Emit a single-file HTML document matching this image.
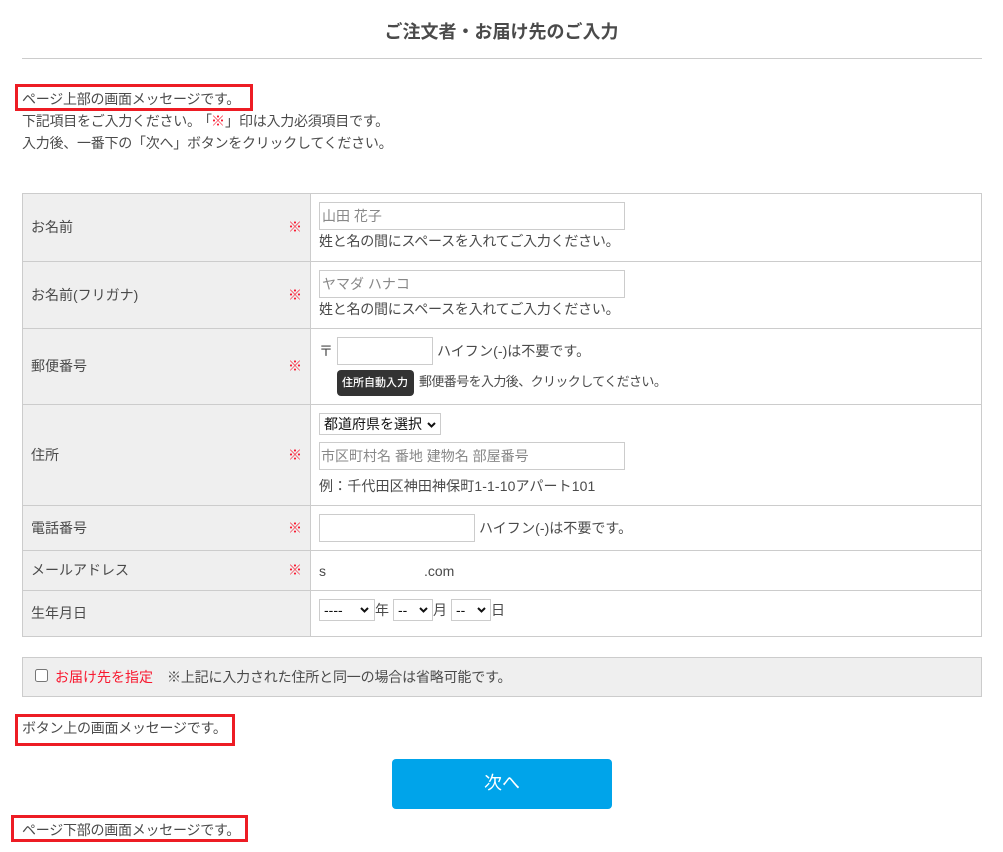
<!DOCTYPE html>
<html lang="ja">
<head>
<meta charset="utf-8">
<title>ご注文者・お届け先のご入力</title>
<style>
html,body{margin:0;padding:0;background:#fff}
body{position:relative;width:1003px;height:852px;overflow:hidden;font-family:"Liberation Sans","Noto Sans CJK JP",sans-serif;font-size:14px;color:#4a4a4a;letter-spacing:-.25px}
.t{position:absolute;white-space:nowrap;line-height:20px;height:20px}
.n{letter-spacing:0}
.w{letter-spacing:.12px}
.h{letter-spacing:.04px}
.b{position:absolute;box-sizing:border-box}
.line{position:absolute;background:#ccc}
.red{color:#f8182f;letter-spacing:0}
.ph{color:#888;letter-spacing:0}
.inp{position:absolute;box-sizing:border-box;border:1px solid #ccc;background:#fff}
.redbox{position:absolute;box-sizing:border-box;border:3px solid #ed1c24}
select{position:absolute;box-sizing:border-box;height:22px;border:1px solid #ccc;border-radius:0;background:#fff;color:#111;font-family:"Liberation Sans","Noto Sans CJK JP",sans-serif;font-size:14px;letter-spacing:0;padding:0 0 0 4px;margin:0;-webkit-appearance:none;appearance:none}
svg.ch{position:absolute;width:9px;height:6px;pointer-events:none}
</style>
</head>
<body>
<div class="t n" style="left:0;width:1003px;top:22px;text-align:center;font-size:18px;font-weight:bold">ご注文者・お届け先のご入力</div>
<div class="line" style="left:22px;top:58px;width:960px;height:1px"></div>

<div class="redbox" style="left:15px;top:84px;width:238px;height:27px"></div>
<div class="t" style="left:22px;top:89px">ページ上部の画面メッセージです。</div>
<div class="t" style="left:22px;top:111px">下記項目をご入力ください。</div>
<div class="t n" style="left:198px;top:111px">「</div>
<div class="t red" style="left:211px;top:111px">※</div>
<div class="t n" style="left:225px;top:111px">」</div>
<div class="t" style="left:239px;top:111px">印は入力必須項目です。</div>
<div class="t" style="left:22px;top:133px">入力後、一番下の「次へ」ボタンをクリックしてください。</div>

<!-- table -->
<div class="b" style="left:22px;top:193px;width:960px;height:444px;border:1px solid #ccc"></div>
<div class="b" style="left:23px;top:194px;width:287px;height:442px;background:#efefef"></div>
<div class="line" style="left:310px;top:194px;width:1px;height:442px"></div>
<div class="line" style="left:23px;top:261px;width:958px;height:1px"></div>
<div class="line" style="left:23px;top:328px;width:958px;height:1px"></div>
<div class="line" style="left:23px;top:404px;width:958px;height:1px"></div>
<div class="line" style="left:23px;top:505px;width:958px;height:1px"></div>
<div class="line" style="left:23px;top:550px;width:958px;height:1px"></div>
<div class="line" style="left:23px;top:590px;width:958px;height:1px"></div>

<div class="t n" style="left:31px;top:217px">お名前</div>
<div class="t red" style="left:288px;top:217px">※</div>
<div class="t n" style="left:31px;top:285px">お名前(フリガナ)</div>
<div class="t red" style="left:288px;top:285px">※</div>
<div class="t n" style="left:31px;top:356px">郵便番号</div>
<div class="t red" style="left:288px;top:356px">※</div>
<div class="t n" style="left:31px;top:445px">住所</div>
<div class="t red" style="left:288px;top:445px">※</div>
<div class="t n" style="left:31px;top:518px">電話番号</div>
<div class="t red" style="left:288px;top:518px">※</div>
<div class="t n" style="left:31px;top:560px">メールアドレス</div>
<div class="t red" style="left:288px;top:560px">※</div>
<div class="t n" style="left:31px;top:603px">生年月日</div>

<!-- name -->
<div class="inp" style="left:319px;top:202px;width:306px;height:28px"></div>
<div class="t ph" style="left:322px;top:206px">山田 花子</div>
<div class="t" style="left:319px;top:231px">姓と名の間にスペースを入れてご入力ください。</div>
<!-- kana -->
<div class="inp" style="left:319px;top:270px;width:306px;height:28px"></div>
<div class="t ph" style="left:322px;top:274px">ヤマダ ハナコ</div>
<div class="t" style="left:319px;top:299px">姓と名の間にスペースを入れてご入力ください。</div>
<!-- zip -->
<div class="t n" style="left:319px;top:341px">〒</div>
<div class="inp" style="left:337px;top:337px;width:96px;height:28px"></div>
<div class="t h" style="left:437px;top:341px">ハイフン(-)は不要です。</div>
<div class="b" style="left:337px;top:370px;width:77px;height:26px;background:#333;border-radius:4px;color:#fff;font-size:11px;font-weight:500;letter-spacing:0;text-align:center;line-height:26px;padding-right:1px;white-space:nowrap">住所自動入力</div>
<div class="t" style="left:419px;top:372px;font-size:13px;letter-spacing:-.6px">郵便番号を入力後、クリックしてください。</div>
<!-- address -->
<select style="left:319px;top:413px;width:122px"><option>都道府県を選択</option></select>
<svg class="ch" style="left:427px;top:422px" viewBox="0 0 9 6"><path d="M1 1l3.500 3.500L8 1" fill="none" stroke="#111" stroke-width="2"/></svg>
<div class="inp" style="left:319px;top:442px;width:306px;height:28px"></div>
<div class="t ph" style="left:321px;top:446px">市区町村名 番地 建物名 部屋番号</div>
<div class="t w" style="left:319px;top:476px">例：千代田区神田神保町1-1-10アパート101</div>
<!-- phone -->
<div class="inp" style="left:319px;top:514px;width:156px;height:28px"></div>
<div class="t h" style="left:479px;top:518px">ハイフン(-)は不要です。</div>
<!-- mail -->
<div class="t n" style="left:319px;top:561px">s</div>
<div class="t n" style="left:424px;top:561px">.com</div>
<!-- birth -->
<select style="left:319px;top:599px;width:56px"><option>----</option></select>
<svg class="ch" style="left:360px;top:607px" viewBox="0 0 9 6"><path d="M1 1l3.500 3.500L8 1" fill="none" stroke="#111" stroke-width="2"/></svg>
<div class="t n" style="left:375px;top:600px">年</div>
<select style="left:393px;top:599px;width:40px"><option>--</option></select>
<svg class="ch" style="left:419px;top:607px" viewBox="0 0 9 6"><path d="M1 1l3.500 3.500L8 1" fill="none" stroke="#111" stroke-width="2"/></svg>
<div class="t n" style="left:433px;top:600px">月</div>
<select style="left:451px;top:599px;width:40px"><option>--</option></select>
<svg class="ch" style="left:477px;top:607px" viewBox="0 0 9 6"><path d="M1 1l3.500 3.500L8 1" fill="none" stroke="#111" stroke-width="2"/></svg>
<div class="t n" style="left:491px;top:600px">日</div>

<!-- delivery -->
<div class="b" style="left:22px;top:657px;width:960px;height:40px;background:#efefef;border:1px solid #ccc"></div>
<input type="checkbox" style="position:absolute;left:35px;top:669px;width:13px;height:13px;margin:0">
<div class="t red" style="left:55px;top:667px">お届け先を指定</div>
<div class="t" style="left:167px;top:667px;letter-spacing:-.17px">※上記に入力された住所と同一の場合は省略可能です。</div>

<div class="redbox" style="left:15px;top:714px;width:220px;height:32px"></div>
<div class="t" style="left:22px;top:718px">ボタン上の画面メッセージです。</div>

<div class="b" style="left:392px;top:759px;width:220px;height:50px;background:#00a4ea;border-radius:4px;color:#fff;font-size:18px;letter-spacing:0;text-align:center;line-height:48px">次へ</div>

<div class="redbox" style="left:11px;top:815px;width:237px;height:27px"></div>
<div class="t" style="left:22px;top:820px">ページ下部の画面メッセージです。</div>
</body>
</html>
